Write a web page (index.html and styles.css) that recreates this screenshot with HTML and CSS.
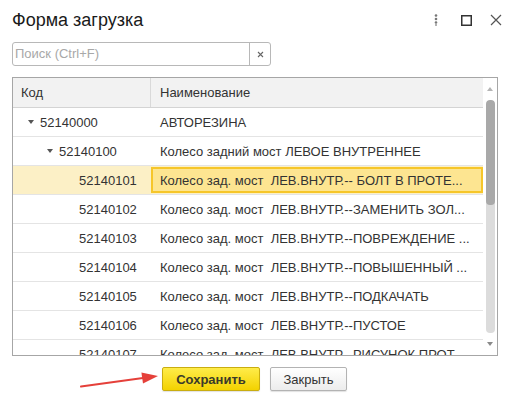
FILE: index.html
```html
<!DOCTYPE html>
<html lang="ru">
<head>
<meta charset="utf-8">
<title>Форма загрузка</title>
<link rel="stylesheet" href="styles.css">
</head>
<body>
<div class="window">
  <div class="titlebar">
    <div class="title">Форма загрузка</div>
    <span class="tb-btn">
      <svg width="4" height="12" viewBox="0 0 4 12"><circle cx="2" cy="1.5" r="1.3" fill="#777"/><circle cx="2" cy="5" r="1.3" fill="#777"/><circle cx="2" cy="8.5" r="1.3" fill="#777"/><circle cx="2" cy="11" r="1" fill="#999"/></svg>
    </span>
    <span class="tb-btn">
      <svg width="11" height="11" viewBox="0 0 11 11"><rect x="0.75" y="0.75" width="9.5" height="9.5" fill="none" stroke="#333" stroke-width="1.5"/></svg>
    </span>
    <span class="tb-btn">
      <svg width="12" height="12" viewBox="0 0 12 12"><path d="M1 1 L11 11 M11 1 L1 11" stroke="#555" stroke-width="1.2" fill="none"/></svg>
    </span>
  </div>

  <div class="search">
    <div class="search-input">Поиск (Ctrl+F)</div>
    <div class="search-clear">
      <svg width="7" height="7" viewBox="0 0 7 7"><path d="M1 1 L6 6 M6 1 L1 6" stroke="#666" stroke-width="1.1"/></svg>
    </div>
  </div>

  <div class="grid">
    <div class="grid-body">
      <div class="row head">
        <div class="c-code">Код</div>
        <div class="c-name">Наименование</div>
      </div>
      <div class="row">
        <div class="c-code lvl1"><span class="tri"></span>52140000</div>
        <div class="c-name">АВТОРЕЗИНА</div>
      </div>
      <div class="row">
        <div class="c-code lvl2"><span class="tri"></span>52140100</div>
        <div class="c-name">Колесо задний мост ЛЕВОЕ ВНУТРЕННЕЕ</div>
      </div>
      <div class="row selected">
        <div class="c-code lvl3">52140101</div>
        <div class="c-name"><span class="cell-focus">Колесо зад. мост  ЛЕВ.ВНУТР.-- БОЛТ В ПРОТЕ...</span></div>
      </div>
      <div class="row">
        <div class="c-code lvl3">52140102</div>
        <div class="c-name">Колесо зад. мост  ЛЕВ.ВНУТР.--ЗАМЕНИТЬ ЗОЛ...</div>
      </div>
      <div class="row">
        <div class="c-code lvl3">52140103</div>
        <div class="c-name">Колесо зад. мост  ЛЕВ.ВНУТР.--ПОВРЕЖДЕНИЕ ...</div>
      </div>
      <div class="row">
        <div class="c-code lvl3">52140104</div>
        <div class="c-name">Колесо зад. мост  ЛЕВ.ВНУТР.--ПОВЫШЕННЫЙ ...</div>
      </div>
      <div class="row">
        <div class="c-code lvl3">52140105</div>
        <div class="c-name">Колесо зад. мост  ЛЕВ.ВНУТР.--ПОДКАЧАТЬ</div>
      </div>
      <div class="row">
        <div class="c-code lvl3">52140106</div>
        <div class="c-name">Колесо зад. мост  ЛЕВ.ВНУТР.--ПУСТОЕ</div>
      </div>
      <div class="row">
        <div class="c-code lvl3">52140107</div>
        <div class="c-name">Колесо зад. мост  ЛЕВ.ВНУТР.--РИСУНОК ПРОТ...</div>
      </div>
    </div>
    <div class="scrollbar">
      <div class="arrow up"></div>
      <div class="track"><div class="thumb"></div></div>
      <div class="arrow down"></div>
    </div>
  </div>

  <div class="footer">
    <svg class="pointer" width="84" height="22" viewBox="0 0 84 22">
      <path d="M3 17.5 L65 9" stroke="#E5403A" stroke-width="2" stroke-linecap="round" fill="none"/>
      <polygon points="80,7 63.4,3.6 65,14.4" fill="#E5403A"/>
    </svg>
    <button class="btn btn-primary">Сохранить</button>
    <button class="btn">Закрыть</button>
  </div>
</div>
</body>
</html>
```

FILE: styles.css
```css
* { box-sizing: border-box; }

html, body {
  margin: 0;
  padding: 0;
  background: #ffffff;
}

body {
  font-family: "Liberation Sans", Arial, sans-serif;
  font-size: 13px;
  color: #333333;
}

.window {
  width: 517px;
  height: 403px;
  padding-left: 12px;
  overflow: hidden;
}

.titlebar {
  display: flex;
  align-items: center;
  height: 40px;
  padding-right: 6px;
}

.title {
  flex: 1;
  font-size: 18px;
  color: #1a1a1a;
}

.tb-btn {
  width: 30px;
  height: 40px;
  display: flex;
  align-items: center;
  justify-content: center;
}

.search {
  margin-top: 2px;
  width: 259px;
  height: 24px;
  display: flex;
  border: 1px solid #b8b8b8;
  border-radius: 3px;
}

.search-input {
  flex: 1;
  padding-left: 2px;
  line-height: 22px;
  color: #a8a8a8;
  border-right: 1px solid #b8b8b8;
}

.search-clear {
  width: 20px;
  display: flex;
  align-items: center;
  justify-content: center;
}

.grid {
  margin-top: 11px;
  width: 486px;
  height: 279px;
  border: 1px solid #a6a6a6;
  display: flex;
  overflow: hidden;
}

.grid-body {
  width: 470px;
  overflow: hidden;
}

.row {
  display: flex;
  height: 29px;
  border-bottom: 1px solid #e4e4e4;
  white-space: pre;
}

.row.head {
  height: 30px;
  background: #f2f2f2;
  border-bottom: 1px solid #d4d4d4;
}

.c-code {
  width: 138px;
  display: flex;
  align-items: center;
  padding-left: 8px;
}

.head .c-code {
  border-right: 1px solid #d9d9d9;
}

.c-name {
  flex: 1;
  display: flex;
  align-items: center;
  padding-left: 9px;
  overflow: hidden;
}

.lvl1 { padding-left: 15px; }
.lvl2 { padding-left: 34px; }
.lvl3 { padding-left: 66px; }

.tri {
  width: 0;
  height: 0;
  margin-right: 6px;
  border-left: 3.5px solid transparent;
  border-right: 3.5px solid transparent;
  border-top: 4px solid #555555;
}

.row.selected {
  background: #fcf0c6;
}

.row.selected .c-name {
  padding: 1px 0 1px 0;
  align-items: stretch;
}

.cell-focus {
  flex: 1;
  display: flex;
  align-items: center;
  padding-left: 7px;
  background: #fde591;
  border: 2px solid #f6c62a;
  overflow: hidden;
}

.scrollbar {
  width: 14px;
  display: flex;
  flex-direction: column;
  align-items: center;
}

.arrow {
  width: 0;
  height: 0;
  border-left: 3.5px solid transparent;
  border-right: 3.5px solid transparent;
}

.arrow.up {
  margin-top: 9px;
  margin-bottom: 9px;
  border-bottom: 4px solid #b5b5b5;
}

.arrow.down {
  margin-top: 9px;
  border-top: 4px solid #8a8a8a;
}

.track {
  width: 9px;
  height: 233px;
  background: #dcdcdc;
  border-radius: 4px;
  overflow: hidden;
}

.thumb {
  height: 105px;
  background: #a9a9a9;
  border-radius: 4px;
}

.footer {
  position: relative;
  margin-top: 11px;
  padding-left: 150px;
  display: flex;
  gap: 10px;
  height: 24px;
}

.pointer {
  position: absolute;
  left: 66px;
  top: 2px;
}

.btn {
  height: 24px;
  padding: 0 12px;
  font-family: "Liberation Sans", Arial, sans-serif;
  font-size: 13px;
  color: #333333;
  background: linear-gradient(#ffffff, #ececec);
  border: 1px solid #b3b3b3;
  border-radius: 2px;
  box-shadow: 0 1px 1px rgba(0,0,0,0.12);
}

.btn-primary {
  width: 98px;
  font-weight: bold;
  color: #3a3a2a;
  background: linear-gradient(#ffec4a, #f3d200);
  border-color: #c9ad10;
}

.btn:not(.btn-primary) {
  width: 77px;
}
```
